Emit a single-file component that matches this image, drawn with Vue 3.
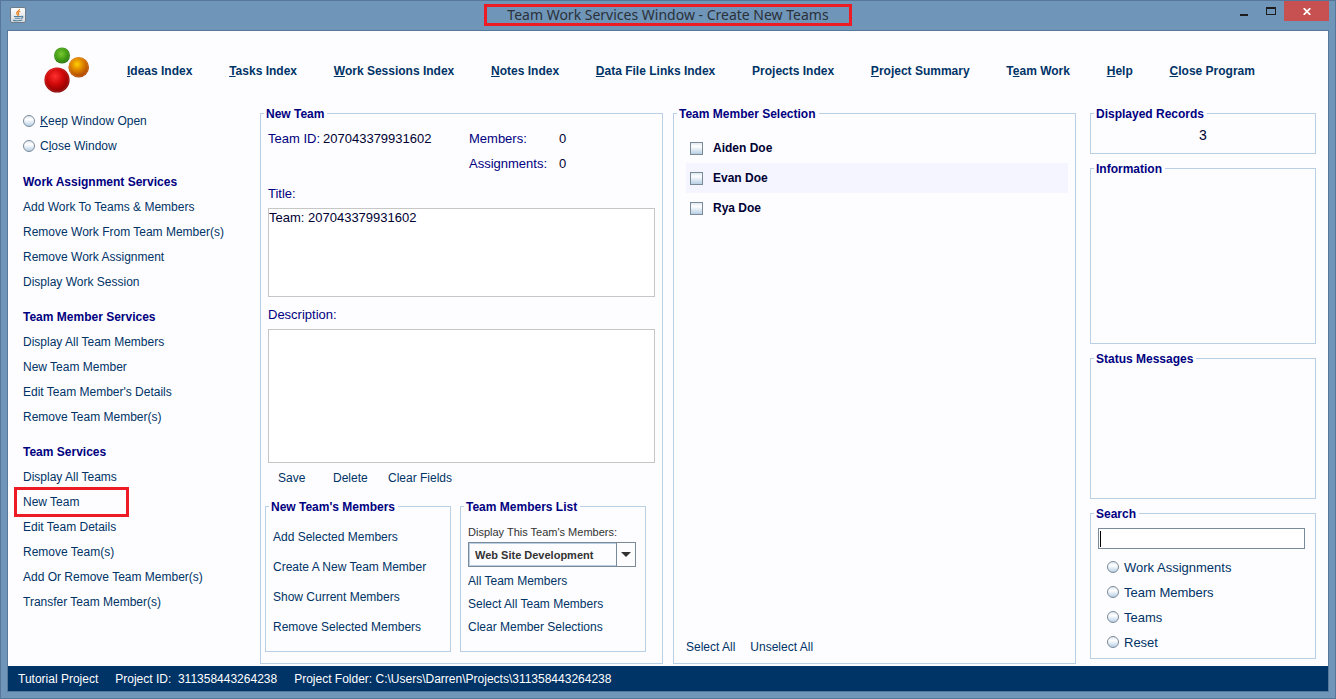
<script setup>
import { ref } from 'vue'

const menu = [
  { key: 'I', rest: 'deas Index' },
  { key: 'T', rest: 'asks Index' },
  { key: 'W', rest: 'ork Sessions Index' },
  { key: 'N', rest: 'otes Index' },
  { key: 'D', rest: 'ata File Links Index' },
  { pre: 'Pro', key: 'j', rest: 'ects Index' },
  { key: 'P', rest: 'roject Summary' },
  { pre: 'T', key: 'e', rest: 'am Work' },
  { key: 'H', rest: 'elp' },
  { key: 'C', rest: 'lose Program' },
]

const groups = [
  {
    title: 'Work Assignment Services',
    items: ['Add Work To Teams & Members', 'Remove Work From Team Member(s)', 'Remove Work Assignment', 'Display Work Session'],
  },
  {
    title: 'Team Member Services',
    items: ['Display All Team Members', 'New Team Member', "Edit Team Member's Details", 'Remove Team Member(s)'],
  },
  {
    title: 'Team Services',
    items: ['Display All Teams', 'New Team', 'Edit Team Details', 'Remove Team(s)', 'Add Or Remove Team Member(s)', 'Transfer Team Member(s)'],
  },
]

const newTeamActions = ['Add Selected Members', 'Create A New Team Member', 'Show Current Members', 'Remove Selected Members']
const listActions = ['All Team Members', 'Select All Team Members', 'Clear Member Selections']
const searchTargets = ['Work Assignments', 'Team Members', 'Teams', 'Reset']

const members = ref([
  { name: 'Aiden Doe', checked: false },
  { name: 'Evan Doe', checked: false },
  { name: 'Rya Doe', checked: false },
])
const title = ref('Team: 207043379931602')
const description = ref('')
const query = ref('')
const windowMode = ref('')
const searchTarget = ref('')
</script>

<template>
  <div class="window">
    <header class="titlebar">
      <svg class="java" viewBox="0 0 16 16" aria-hidden="true">
        <defs>
          <linearGradient id="tile" x1="0" y1="0" x2="0" y2="1">
            <stop offset="0" stop-color="#ffffff" />
            <stop offset="1" stop-color="#d4d9dd" />
          </linearGradient>
        </defs>
        <rect x="0.5" y="0.5" width="15" height="15" rx="1.5" fill="url(#tile)" stroke="#6d7c88" />
        <path d="M9.500 2C10 3.500 6 4.500 6.700 6.300C7 7.200 7.700 7.800 7.500 8.600M10.300 4.300C8.600 5 7.600 5.800 8.600 7C9 7.500 8.700 8.100 8.300 8.500" fill="none" stroke="#e8862a" stroke-width="1.200" />
        <path d="M4 9.500H11M4.800 11.300H10.500M3 13.300C5 14 10 14 12.300 13M11 9.500C13.500 8.600 13.500 11 11 11.500" fill="none" stroke="#4f7f9f" stroke-width="1.100" />
      </svg>
      <h1 class="caption">Team Work Services Window - Create New Teams</h1>
      <div class="controls">
        <button type="button" class="control" aria-label="Minimize">
          <svg width="10" height="12" viewBox="0 0 10 12"><path d="M1 9h8v2H1z" fill="#1d1d1d" /></svg>
        </button>
        <button type="button" class="control" aria-label="Maximize">
          <svg width="10" height="8" viewBox="0 0 10 8"><path d="M0 0h10v8H0zM1 2v5h8V2z" fill="#1d1d1d" fill-rule="evenodd" /></svg>
        </button>
        <button type="button" class="control close" aria-label="Close">
          <svg width="8" height="7" viewBox="0 0 8 7"><path d="M0.700 0.200L7.300 6.800M7.300 0.200L0.700 6.800" stroke="#fff" stroke-width="1.800" /></svg>
        </button>
      </div>
    </header>

    <div class="client">
      <div class="top">
        <svg class="logo" viewBox="0 0 46 46" role="img" aria-label="Logo">
          <defs>
            <radialGradient id="green" cx="0.45" cy="0.4" r="0.6">
              <stop offset="0" stop-color="#78c832" /><stop offset="0.6" stop-color="#449e14" /><stop offset="1" stop-color="#23700a" />
            </radialGradient>
            <radialGradient id="orange" cx="0.42" cy="0.35" r="0.65">
              <stop offset="0" stop-color="#ffd000" /><stop offset="0.45" stop-color="#df8500" /><stop offset="1" stop-color="#a63e00" />
            </radialGradient>
            <radialGradient id="red" cx="0.42" cy="0.35" r="0.65">
              <stop offset="0" stop-color="#ff3030" /><stop offset="0.5" stop-color="#cf0808" /><stop offset="1" stop-color="#850000" />
            </radialGradient>
          </defs>
          <circle cx="18" cy="8.500" r="8" fill="url(#green)" />
          <circle cx="18" cy="8.500" r="6.800" fill="none" stroke="#7cba58" stroke-opacity="0.400" stroke-width="0.700" />
          <circle cx="34.700" cy="20.300" r="10.300" fill="url(#orange)" />
          <circle cx="34.700" cy="20.300" r="9.300" fill="none" stroke="#f0a860" stroke-opacity="0.400" stroke-width="0.700" />
          <circle cx="13" cy="33" r="12.600" fill="url(#red)" />
          <circle cx="13" cy="33" r="11.500" fill="none" stroke="#f08080" stroke-opacity="0.350" stroke-width="0.700" />
        </svg>
        <nav class="menu">
          <a v-for="m in menu" :key="m.key + m.rest" href="#">{{ m.pre }}<u>{{ m.key }}</u>{{ m.rest }}</a>
        </nav>
      </div>

      <main class="body">
        <aside class="sidebar">
          <label class="choice"><input v-model="windowMode" type="radio" name="mode" value="keep"><span><u>K</u>eep Window Open</span></label>
          <label class="choice"><input v-model="windowMode" type="radio" name="mode" value="close"><span>C<u>l</u>ose Window</span></label>
          <section v-for="g in groups" :key="g.title" class="group">
            <h2>{{ g.title }}</h2>
            <button v-for="item in g.items" :key="item" type="button" class="action" :class="{ marked: item === 'New Team' }">{{ item }}</button>
          </section>
        </aside>

        <fieldset class="panel team">
          <legend>New Team</legend>
          <div class="facts">
            <span class="identity">Team ID: <b>207043379931602</b></span>
            <span>Members:</span><b>0</b>
            <span class="second">Assignments:</span><b>0</b>
          </div>
          <label class="caption-label" for="team-title">Title:</label>
          <textarea id="team-title" v-model="title" class="title-field"></textarea>
          <label class="caption-label" for="team-description">Description:</label>
          <textarea id="team-description" v-model="description" class="description-field"></textarea>
          <div class="commands">
            <button type="button" class="action">Save</button>
            <button type="button" class="action">Delete</button>
            <button type="button" class="action">Clear Fields</button>
          </div>
          <div class="subpanels">
            <fieldset class="panel roomy">
              <legend>New Team's Members</legend>
              <button v-for="a in newTeamActions" :key="a" type="button" class="action">{{ a }}</button>
            </fieldset>
            <fieldset class="panel tight">
              <legend>Team Members List</legend>
              <label class="small" for="team-list">Display This Team's Members:</label>
              <div class="combo">
                <select id="team-list"><option>Web Site Development</option></select>
                <span class="drop"><svg width="10" height="5" viewBox="0 0 10 5"><path d="M0 0h10L5 5z" fill="#333" /></svg></span>
              </div>
              <button v-for="a in listActions" :key="a" type="button" class="action">{{ a }}</button>
            </fieldset>
          </div>
        </fieldset>

        <fieldset class="panel selection">
          <legend>Team Member Selection</legend>
          <div class="members">
            <label v-for="m in members" :key="m.name" class="member"><input v-model="m.checked" type="checkbox">{{ m.name }}</label>
          </div>
          <div class="select-row">
            <button type="button" class="action">Select All</button>
            <button type="button" class="action">Unselect All</button>
          </div>
        </fieldset>

        <div class="side">
          <fieldset class="panel records"><legend>Displayed Records</legend><output>3</output></fieldset>
          <fieldset class="panel info"><legend>Information</legend></fieldset>
          <fieldset class="panel status"><legend>Status Messages</legend></fieldset>
          <fieldset class="panel search">
            <legend>Search</legend>
            <div class="query"><input v-model="query" type="text" aria-label="Search"></div>
            <label v-for="s in searchTargets" :key="s" class="choice"><input v-model="searchTarget" type="radio" name="target" :value="s"><span>{{ s }}</span></label>
          </fieldset>
        </div>
      </main>

      <footer class="statusbar">
        <span>Tutorial Project</span>
        <span>Project ID:&nbsp; 311358443264238</span>
        <span>Project Folder: C:\Users\Darren\Projects\311358443264238</span>
      </footer>
    </div>
  </div>
</template>

<style>
body {
  margin: 0;
}
</style>

<style scoped>
.window,
.window *,
.window *::before,
.window *::after {
  box-sizing: border-box;
}

.window {
  display: flex;
  flex-direction: column;
  min-height: 100vh;
  padding: 0 6px 6px;
  border: 1px solid #56779a;
  background: #6f95b8;
  color: #003366;
  font: 12px/25px "Liberation Sans", Arial, sans-serif;
}

/* Title bar */
.titlebar {
  display: grid;
  grid-template-columns: 1fr auto 1fr;
  align-items: start;
  height: 29px;
}

.java {
  width: 16px;
  height: 16px;
  margin: 6px 0 0 3px;
}

.caption {
  margin: 3px 0 0;
  padding: 0 20px;
  border: 3px solid #ed1c24;
  color: #2b3138;
  font: 14px/16px "Noto Sans", "Open Sans", sans-serif;
  white-space: nowrap;
}

.controls {
  display: flex;
  justify-content: flex-end;
}

button {
  padding: 0;
  border: 0;
  background: none;
  color: inherit;
  font: inherit;
  text-align: left;
  white-space: nowrap;
}

.action {
  padding-top: 1px;
  line-height: 24px;
}

.control {
  display: flex;
  align-items: center;
  justify-content: center;
  width: 27px;
  height: 20px;
}

.close {
  width: 45px;
  background: #c75050;
}

/* Client area */
.client {
  display: flex;
  flex: 1;
  flex-direction: column;
  border: 1px solid #56799a;
  background: #fdfdff;
}

.top {
  display: flex;
  height: 76px;
  padding-left: 36px;
}

.logo {
  flex: none;
  width: 46px;
  height: 46px;
  margin-top: 16px;
}

.menu {
  display: flex;
  flex: 1;
  justify-content: space-between;
  margin: 28px 73px 0 37px;
  font-weight: bold;
}

a {
  color: #003366;
  text-decoration: none;
  white-space: nowrap;
}

.body {
  display: grid;
  flex: 1;
  grid-template-columns: 234px minmax(0, 1fr) minmax(0, 1fr) 230px;
  column-gap: 10px;
  padding: 0 12px 2px 8px;
}

/* Sidebar */
.sidebar {
  padding: 2px 0 0 7px;
}

.choice {
  display: flex;
  align-items: center;
  gap: 5px;
  height: 25px;
}

.sidebar .choice {
  line-height: 27px;
}

input[type="radio"] {
  appearance: none;
  width: 12px;
  height: 12px;
  margin: 0 0 2px;
  border: 1px solid #7a8a99;
  border-radius: 50%;
  background: linear-gradient(#dfe8f1, #ffffff 35%, #b8cfe5);
}

input:checked {
  box-shadow: inset 0 0 0 3px #335577;
}

.group {
  display: flex;
  flex-direction: column;
  align-items: flex-start;
  margin-top: 10px;
}

h2 {
  height: 25px;
  margin: 0;
  color: #000080;
  font-weight: bold;
  font-size: 12px;
  line-height: 27px;
}

.marked {
  position: relative;
}

.marked::after {
  position: absolute;
  top: -2px;
  left: -9px;
  width: 115px;
  height: 30px;
  border: 3px solid #ed1c24;
  content: "";
}

/* Panels */
.panel {
  display: flex;
  flex-direction: column;
  min-width: 0;
  margin: 0;
  border: 1px solid #b8cfe5;
}

legend {
  height: 13px;
  margin-left: -4px;
  padding: 0 3px 0 2px;
  color: #000080;
  font-weight: bold;
  line-height: 15px;
}

.team {
  padding: 6px 7px 11px;
}

.facts {
  display: grid;
  grid-template-columns: 201px 90px auto;
  color: #000080;
  font-size: 13px;
}

.identity {
  display: flex;
  gap: 3px;
}

.facts b {
  color: #000033;
  font-weight: normal;
}

.second {
  grid-column: 2;
}

.caption-label {
  margin: 5px 0 2px;
  color: #000080;
  font-size: 13px;
}

textarea {
  display: block;
  width: 100%;
  margin: 0;
  padding: 1px 0;
  border: 1px solid #c6c6c6;
  outline: 0;
  background: #fff;
  color: #000033;
  font: 13px/16px "Liberation Sans", Arial, sans-serif;
  resize: none;
}

.title-field {
  height: 89px;
}

.description-field {
  flex: 1;
  min-height: 134px;
}

.commands {
  display: grid;
  grid-template-columns: 55px 55px auto;
  margin: 2px 0 10px 10px;
}

.subpanels {
  display: grid;
  grid-template-columns: repeat(2, minmax(0, 1fr));
  gap: 9px;
  margin: 0 9px 0 -3px;
}

.subpanels .panel {
  padding: 9px 7px;
}

.roomy .action {
  padding-top: 0;
  line-height: 30px;
}

.tight .action {
  line-height: 22px;
}

.small {
  color: #333;
  font-size: 11px;
  line-height: 20px;
}

.combo {
  display: flex;
  position: relative;
  height: 25px;
  margin: 0 2px 2px 0;
}

select {
  appearance: none;
  width: 100%;
  margin: 0;
  padding: 0 26px 0 6px;
  border: 1px solid #7a8a99;
  border-radius: 0;
  outline: 0;
  background: #fdfdff;
  box-shadow: inset 0 0 0 1px #b8cfe5;
  color: #333;
  font: bold 11px/20px "Liberation Sans", Arial, sans-serif;
}

.drop {
  display: flex;
  position: absolute;
  top: 1px;
  right: 1px;
  bottom: 1px;
  align-items: center;
  justify-content: center;
  width: 19px;
  border-left: 1px solid #7a8a99;
  background: #fdfdff;
  pointer-events: none;
}

/* Member selection */
.selection {
  padding: 13px 7px 4px 12px;
}

.selection > legend {
  margin-left: -9px;
}

.members {
  flex: 1;
}

.member {
  display: flex;
  align-items: center;
  gap: 10px;
  height: 30px;
  padding-left: 4px;
  color: #000033;
  font-weight: bold;
}

.member:nth-child(even) {
  background: #f5f5ff;
}

input[type="checkbox"] {
  appearance: none;
  width: 13px;
  height: 13px;
  margin: 0;
  border: 1px solid #7a8a99;
  background: linear-gradient(#dfe8f1, #ffffff 30%, #b8cfe5);
}

.select-row {
  display: flex;
  gap: 15px;
}

/* Right column */
.side {
  display: flex;
  flex-direction: column;
  gap: 8px;
  padding: 0 0 5px 4px;
}

.side .panel {
  padding: 0 7px;
}

.side .records {
  height: 47px;
  padding-top: 3px;
}

output {
  color: #000033;
  font-size: 14px;
  text-align: center;
}

.side .info {
  flex: 1 0 182px;
}

.side .status {
  flex: 1 0 147px;
}

.side .search {
  padding: 8px 10px 3px 7px;
}

.query {
  position: relative;
  margin-bottom: 6px;
}

.query::before {
  position: absolute;
  top: 3px;
  left: 2px;
  width: 1px;
  height: 16px;
  background: #000;
  content: "";
}

input[type="text"] {
  display: block;
  width: 100%;
  height: 21px;
  padding: 0 3px;
  border: 1px solid #7a8a99;
  border-radius: 0;
  outline: 0;
  background: #fff;
  font: inherit;
}

.search .choice {
  padding-left: 9px;
  font-size: 13px;
}

/* Status bar */
.statusbar {
  display: flex;
  gap: 17px;
  padding: 1px 10px 0;
  background: #003366;
  color: #fff;
  line-height: 24px;
  white-space: nowrap;
}
</style>
